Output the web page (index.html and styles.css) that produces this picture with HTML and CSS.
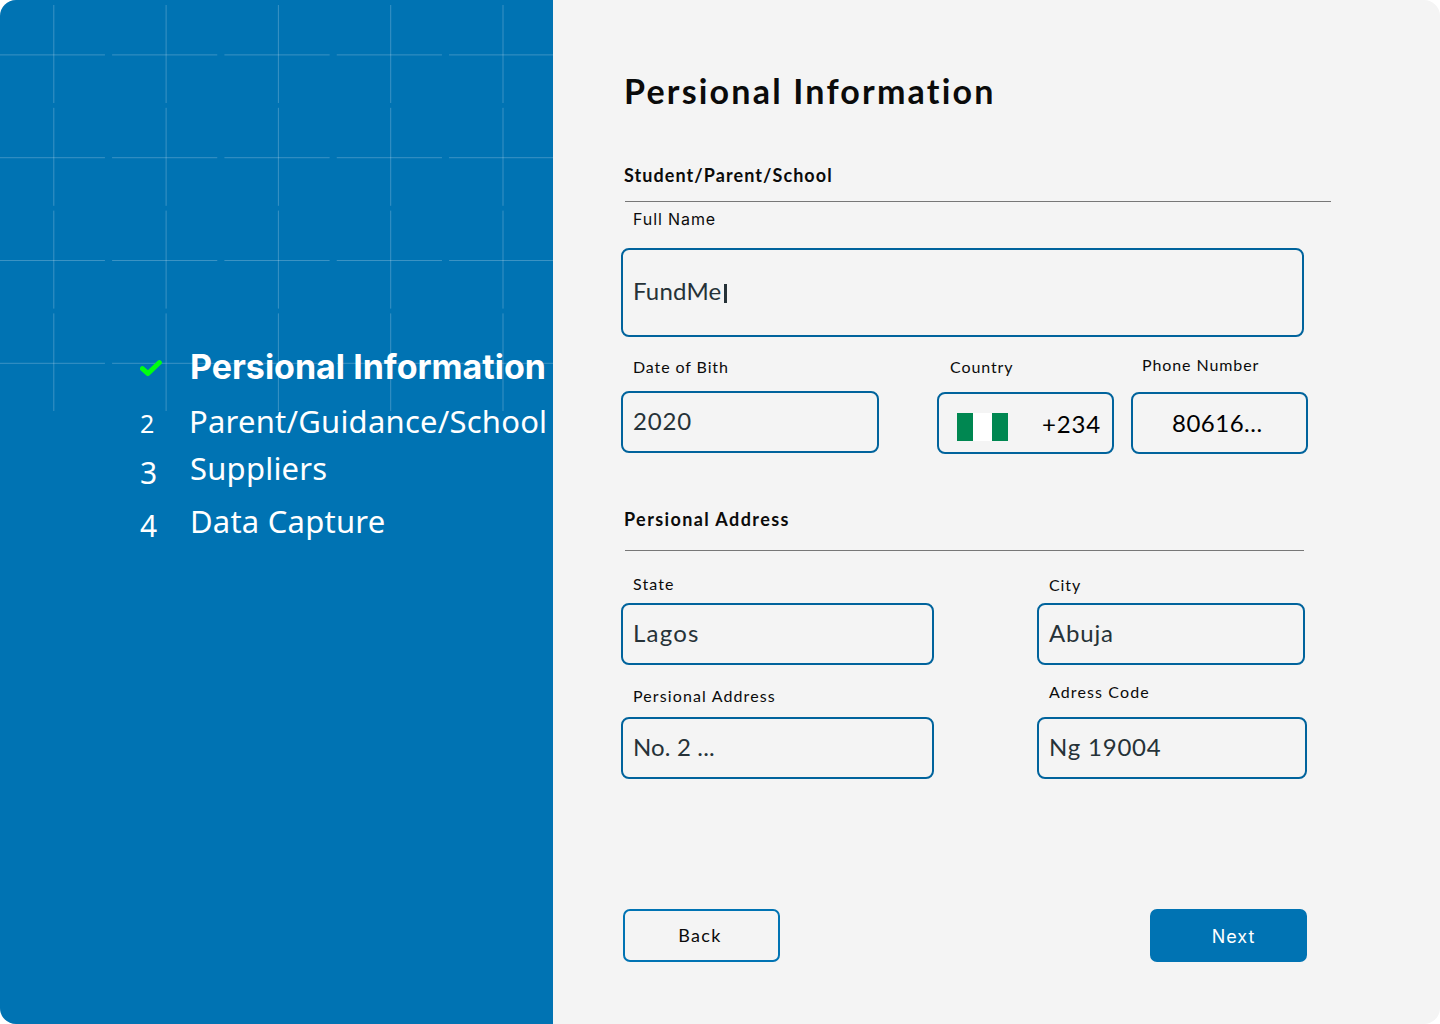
FILE: index.html
```html
<!DOCTYPE html>
<html lang="en">
<head>
<meta charset="utf-8">
<title>Persional Information</title>
<link rel="stylesheet" href="styles.css">
</head>
<body>
<div class="page">
  <aside class="sidebar">
    <svg class="lattice" width="553" height="412" viewBox="0 0 553 412" fill="none" stroke="#fff" stroke-opacity=".23" aria-hidden="true">
      <path stroke-dasharray="105.2 7.13" d="M-.25 54.9H560M-.25 157.7H560M-.25 260.5H560M-.25 363.3H560"/>
      <path stroke-dasharray="98 4.8" d="M53.8 5V411M166.1 5V411M278.4 5V411M390.7 5V411M503 5V411"/>
    </svg>
    <ol class="steps">
      <li class="step step-current">
        <svg class="check" width="22" height="17" viewBox="0 0 22 17" aria-hidden="true"><path d="M2.4 8.6 8 13.6 19.4 2.6" fill="none" stroke="#0f1" stroke-width="4.9" stroke-linecap="round" stroke-linejoin="round"/></svg>
        <span class="step-name">Persional Information</span>
      </li>
      <li class="step step-parent"><span class="num num-small">2</span><span class="step-name">Parent/Guidance/School</span></li>
      <li class="step step-suppliers"><span class="num">3</span><span class="step-name">Suppliers</span></li>
      <li class="step step-capture"><span class="num">4</span><span class="step-name">Data Capture</span></li>
    </ol>
  </aside>
  <main class="form">
    <h1 class="title">Persional Information</h1>

    <h2 class="heading heading-student">Student/Parent/School</h2>
    <div class="rule rule-wide"></div>
    <div class="field field-name">
      <span class="label label-name">Full Name</span>
      <div class="box box-tall"><span class="t-name">FundMe</span><span class="caret"></span></div>
    </div>
    <div class="row row-contact">
      <div class="field field-dob">
        <span class="label">Date of Bith</span>
        <div class="box"><span class="t-wide">2020</span></div>
      </div>
      <div class="field field-country">
        <span class="label">Country</span>
        <div class="box box-country">
          <svg width="51" height="28" viewBox="0 0 51 28" aria-hidden="true"><path fill="#fff" d="M0 0h51v28H0z"/><path fill="#008751" d="M0 0h16v28H0zM35 0h16v28H35z"/></svg>
          <span class="t-wide">+234</span>
        </div>
      </div>
      <div class="field field-phone">
        <span class="label">Phone Number</span>
        <div class="box box-phone"><span class="t-number">80616...</span></div>
      </div>
    </div>

    <h2 class="heading heading-address">Persional Address</h2>
    <div class="rule"></div>
    <div class="row row-state">
      <div class="field field-left">
        <span class="label label-state">State</span>
        <div class="box"><span class="t-lagos">Lagos</span></div>
      </div>
      <div class="field field-city">
        <span class="label">City</span>
        <div class="box"><span class="t-wide">Abuja</span></div>
      </div>
    </div>
    <div class="row row-street">
      <div class="field field-left">
        <span class="label label-address">Persional Address</span>
        <div class="box"><span class="t-street">No. 2 ...</span></div>
      </div>
      <div class="field field-code">
        <span class="label label-address">Adress Code</span>
        <div class="box"><span class="t-wide">Ng 19004</span></div>
      </div>
    </div>

    <div class="actions">
      <button class="btn btn-back" type="button">Back</button>
      <button class="btn btn-next" type="button">Next</button>
    </div>
  </main>
</div>
</body>
</html>
```
FILE: styles.css
```css
* { box-sizing: border-box; }
body { margin: 0; background: #fff; }

.page {
  display: flex;
  width: 1440px;
  height: 1024px;
  border-radius: 16px;
  overflow: hidden;
  background: #f4f4f4;
  font-family: Lato, sans-serif;
  color: #0b0b0b;
}

/* Sidebar */
.sidebar {
  position: relative;
  flex: none;
  width: 553px;
  background: #0073b3;
  color: #fff;
}
.lattice { position: absolute; top: 0; left: 0; }
.steps {
  position: relative;
  margin: 0;
  padding: 347px 0 0 140px;
  list-style: none;
  white-space: nowrap;
}
.step { display: flex; height: 40px; line-height: 40px; }
.check { flex: none; margin: 13px 28px 0 0; }
.num {
  flex: none;
  width: 50px;
  padding-top: 5px;
  font-family: "Noto Sans", sans-serif;
  font-size: 30px;
}
.num-small { width: 49px; padding-top: 2px; font-size: 25px; }
.step-name { font-family: "Noto Sans", sans-serif; font-size: 31px; letter-spacing: .22px; }
.step-current .step-name { font-family: Inter, sans-serif; font-size: 34px; font-weight: 700; letter-spacing: 0; }
.step-parent { margin-top: 14px; }
.step-suppliers { margin-top: 7px; }
.step-capture { margin-top: 13px; }

/* Form */
.form { flex: 1; padding: 69px 0 0 68px; white-space: nowrap; }
.title { margin: 0 0 0 3px; font-size: 34px; line-height: 44px; font-weight: 700; letter-spacing: 2.2px; }
.heading { margin: 0 0 0 3px; font-size: 18px; line-height: 24px; font-weight: 700; letter-spacing: 1.07px; }
.heading-student { margin-top: 50px; }
.heading-address { margin-top: 53px; letter-spacing: 1.4px; }
.rule { width: 679px; height: 1px; margin: 19px 0 0 4px; background: #777; }
.rule-wide { width: 706px; margin-top: 14px; }

.row { display: flex; }
.field { display: flex; flex-direction: column; }
.label { padding-left: 12px; font-size: 16px; line-height: 20px; letter-spacing: .9px; }
.label-name { font-family: Inter, sans-serif; letter-spacing: .9px; }
.label-state { letter-spacing: 1.12px; }
.label-address { letter-spacing: 1.12px; }
.box {
  display: flex;
  align-items: center;
  height: 62px;
  margin-top: auto;
  padding: 0 10px 4px;
  border: 2px solid #00639c;
  border-radius: 8px;
  font-size: 24px;
  color: #263238;
}
.t-wide { letter-spacing: .8px; }
.t-name { letter-spacing: .2px; }
.t-number { letter-spacing: .5px; }
.t-lagos { letter-spacing: 1.2px; }
.t-street { letter-spacing: .15px; }
.field-name { width: 683px; height: 128px; margin-top: 7px; }
.box-tall { height: 89px; }
.caret { width: 3px; height: 19px; margin: 6px 0 0 2px; background: #263238; }

.row-contact { margin-top: 18px; }
.field-dob { width: 258px; height: 98px; padding-top: 2px; }
.field-country { width: 177px; height: 99px; margin-left: 58px; padding-top: 2px; }
.field-phone { width: 177px; height: 99px; margin-left: 17px; }
.box-country { justify-content: space-between; padding: 7px 11px 0 18px; color: #000; }
.box-country span { margin-top: -6px; }
.field-phone .label { padding-left: 11px; }
.box-phone { padding: 0 0 2px 39px; color: #000; }
.field-country .label { padding-left: 13px; }

.row-state { height: 91px; margin-top: 23px; }
.field-left { width: 313px; }
.field-city { width: 268px; margin-left: 103px; padding-top: 1px; }
.row-street { height: 97px; margin-top: 17px; }
.row-street .field-left { padding-top: 4px; }
.field-code { width: 270px; margin-left: 103px; }

.actions { display: flex; justify-content: space-between; width: 686px; margin-top: 130px; padding-left: 2px; }
.btn {
  width: 157px;
  height: 53px;
  padding: 0;
  border: 2px solid #0073b3;
  border-radius: 7px;
  background: transparent;
  font: 400 18px/49px Lato, sans-serif;
  letter-spacing: 1px;
  color: #0b0b0b;
}
.btn-back { padding-right: 3px; letter-spacing: 1.3px; }
.btn-next { padding: 1px 0 0 10px; background: #0073b3; font-family: Inter, sans-serif; color: #fff; }
```
